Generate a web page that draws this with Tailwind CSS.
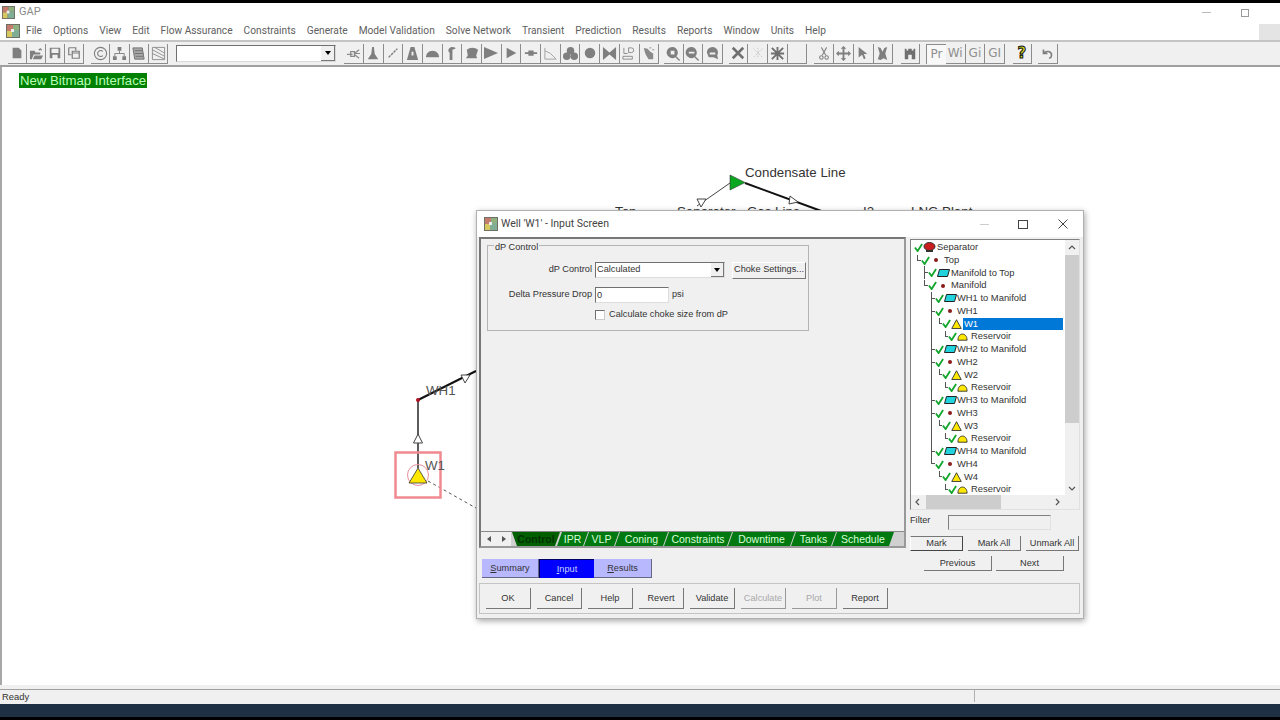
<!DOCTYPE html>
<html lang="en">
  <head>
    <meta charset="UTF-8" />
    <title>GAP</title>
    <script src="https://cdn.jsdelivr.net/npm/@tailwindcss/browser@4"></script>
  </head>
  <body class="bg-white font-['Liberation_Sans',Arial,sans-serif] overflow-hidden">
    <!-- shared icons -->
    <svg class="hidden">
      <symbol id="appicon" viewBox="0 0 14 14">
        <rect width="14" height="14" fill="#6f6f66" /><rect x="1" y="1" width="6" height="6" fill="#c47a6c" /><rect x="7" y="1" width="6" height="5" fill="#8fb07f" /><rect x="1" y="7" width="5" height="6" fill="#d8c860" /><rect x="6" y="6" width="7" height="7" fill="#7fae94" /><rect x="5" y="5" width="3" height="3" fill="#eee" />
      </symbol>
      <symbol id="check" viewBox="0 0 10 10"><path d="M1 5l3 4 5-8" fill="none" stroke="#12a62c" stroke-width="2" /></symbol>
      <symbol id="pipe" viewBox="0 0 13 8"><path d="M2.5.5h10l-2 7H.5z" fill="#22d3dd" stroke="#222" /></symbol>
      <symbol id="dot" viewBox="0 0 10 10"><circle cx="5" cy="5" r="2" fill="#8b1a1a" /></symbol>
      <symbol id="well" viewBox="0 0 12 11"><path d="M6 .8l5.2 9.6H.8z" fill="#ffe800" stroke="#333" /></symbol>
      <symbol id="res" viewBox="0 0 12 8"><path d="M1 7.5C1 3 3.5.8 6 .8S11 3 11 7.5z" fill="#ffe800" stroke="#333" /></symbol>
      <symbol id="sep" viewBox="0 0 13 10"><ellipse cx="6.5" cy="4.5" rx="5.5" ry="4" fill="#c81e1e" stroke="#333" /><path d="M3 9h7" stroke="#333" stroke-width="2" /></symbol>
    </svg>

    <div class="flex flex-col h-[720px] w-[1280px]">
      <div class="h-[3px] bg-black"></div>

      <!-- title bar -->
      <div class="h-[19px] flex items-center pl-[2px] relative">
        <svg class="w-[13px] h-[13px]"><use href="#appicon" /></svg>
        <span class="ml-[4px] text-[11px] text-[#8a8a8a] font-['Roboto',sans-serif]">GAP</span>
        <div class="absolute left-[1202px] top-[9px] w-[9px] h-px bg-[#bbbbbb]"></div>
        <div class="absolute left-[1241px] top-[6px] w-[8px] h-[8px] border border-[#9a9a9a] bg-white"></div>
      </div>

      <!-- menu bar -->
      <div class="h-[18px] flex items-center pl-[6px] text-[10.2px] text-[#606060] font-['Roboto',sans-serif] relative">
        <svg class="w-[14px] h-[14px] mr-[6px]"><use href="#appicon" /></svg>
        <div class="flex gap-[11px]">
          <span>File</span><span>Options</span><span>View</span><span>Edit</span><span>Flow Assurance</span><span>Constraints</span><span>Generate</span><span>Model Validation</span><span>Solve Network</span><span>Transient</span><span>Prediction</span><span>Results</span><span>Reports</span><span>Window</span><span>Units</span><span>Help</span>
        </div>
        <div class="absolute left-[1259px] top-[2px] w-[21px] h-[16px] bg-[#e4e4e4]"></div>
      </div>

      <!-- toolbar -->
      <div class="h-[27px] bg-[#f0f0f0] border-t-2 border-b-2 border-t-[#c4c4c4] border-b-[#a0a0a0] flex items-center pl-[8px] text-[#7a7a7a]">
        <div class="flex">
          <span class="flex items-center justify-center w-[19px] h-[20px] border-r border-b border-[#8c8c8c]"><svg class="w-[14px] h-[14px]" viewBox="0 0 16 16" fill="#7f7f7f"><path d="M3 2h7l3 3v9H3z" /></svg></span>
          <span class="flex items-center justify-center w-[19px] h-[20px] border-r border-b border-[#8c8c8c]"><svg class="w-[15px] h-[15px]" viewBox="0 0 16 16" fill="#7f7f7f"><path d="M1 14V5h5l1 2h5v2H5l-2 5zM4 14l2-4h9l-2 4zM10 4l2-2 2 2-1 1-1-1-1 1z" /></svg></span>
          <span class="flex items-center justify-center w-[19px] h-[20px] border-r border-b border-[#8c8c8c]"><svg class="w-[14px] h-[14px]" viewBox="0 0 16 16" fill="#7f7f7f"><path fill-rule="evenodd" d="M2 2h12v12H2zM4 3v5h8V3zM5 10v4h6v-4z" /></svg></span>
          <span class="flex items-center justify-center w-[19px] h-[20px] border-r border-b border-[#8c8c8c]"><svg class="w-[14px] h-[14px]" viewBox="0 0 16 16" fill="none" stroke="#7f7f7f" stroke-width="1.4"><path d="M2 2h8v3M2 2v8h3M6 6h8v8H6zM6 8h8" /></svg></span>
        </div>
        <div class="flex ml-[7px]">
          <span class="flex items-center justify-center w-[19.3px] h-[20px] border-r border-b border-[#8c8c8c]"><svg class="w-[15px] h-[15px]" viewBox="0 0 16 16" fill="none" stroke="#7f7f7f" stroke-width="1.2"><circle cx="8" cy="8" r="6.5" /><path d="M10.5 5.8a3.2 3.2 0 1 0 0 4.4" /></svg></span>
          <span class="flex items-center justify-center w-[19.3px] h-[20px] border-r border-b border-[#8c8c8c]"><svg class="w-[15px] h-[15px]" viewBox="0 0 16 16" fill="#7f7f7f"><path d="M6 1h4v4H6zM1 11h4v4H1zM11 11h4v4h-4z" /><path d="M8 5v3M3 11V8h10v3" stroke="#7f7f7f" fill="none" /></svg></span>
          <span class="flex items-center justify-center w-[19.3px] h-[20px] border-r border-b border-[#8c8c8c]"><svg class="w-[15px] h-[15px]" viewBox="0 0 16 16" fill="#a8a8a8"><path d="M2 2h10l2 12H4zM4 5h8M4 8h9M5 11h8" stroke="#707070" /></svg></span>
          <span class="flex items-center justify-center w-[19.3px] h-[20px] border-r border-b border-[#8c8c8c]"><svg class="w-[15px] h-[15px]" viewBox="0 0 16 16" fill="none" stroke="#8f8f8f"><path d="M1.5 1.5h13v13h-13zM1.5 4l13 7M1.5 8l13 6M4 1.5l10.5 6" /></svg></span>
        </div>
        <div class="ml-[8px] w-[160px] h-[17px] bg-white border border-t-[#707070] border-l-[#707070] border-r-[#d8d8d8] border-b-[#d8d8d8] flex justify-end">
          <span class="w-[14px] h-full bg-[#f0f0f0] border-r border-b border-[#777777] flex items-center justify-center"><span class="w-0 h-0 border-x-[3.5px] border-x-transparent border-t-[4px] border-t-black"></span></span>
        </div>
        <div class="flex ml-[8px]">
          <span class="flex items-center justify-center w-[19.7px] h-[20px] border-r border-b border-[#8c8c8c]"><svg class="w-[15px] h-[15px]" viewBox="0 0 16 16" fill="none" stroke="#8a8a8a" stroke-width="1.3"><path d="M1 9h6M5 6h4v5H5zM9 8l5-4M9 8h6M9 9l5 4" /></svg></span>
          <span class="flex items-center justify-center w-[19.7px] h-[20px] border-r border-b border-[#8c8c8c]"><svg class="w-[14px] h-[14px]" viewBox="0 0 16 16" fill="#7f7f7f"><path d="M7 1h2l1 8 4 6H2l4-6z" /></svg></span>
          <span class="flex items-center justify-center w-[19.7px] h-[20px] border-r border-b border-[#8c8c8c]"><svg class="w-[14px] h-[14px]" viewBox="0 0 16 16" fill="none" stroke="#7f7f7f" stroke-width="1.6"><path d="M3 13L13 3" stroke-dasharray="3 1" /></svg></span>
          <span class="flex items-center justify-center w-[19.7px] h-[20px] border-r border-b border-[#8c8c8c]"><svg class="w-[15px] h-[15px]" viewBox="0 0 16 16" fill="#7f7f7f"><path fill-rule="evenodd" d="M6 1h4l4 14H2zM7 6v4h2V6z" /></svg></span>
          <span class="flex items-center justify-center w-[19.7px] h-[20px] border-r border-b border-[#8c8c8c]"><svg class="w-[15px] h-[15px]" viewBox="0 0 16 16" fill="#7f7f7f"><path d="M1 12c0-4 3-7 7-7s7 3 7 7z" /></svg></span>
          <span class="flex items-center justify-center w-[19.7px] h-[20px] border-r border-b border-[#8c8c8c]"><svg class="w-[15px] h-[15px]" viewBox="0 0 16 16" fill="#7f7f7f"><path d="M6 15V7C4 6 4 2 8 1c3 0 5 1 4 2l-3 1v11z" /></svg></span>
          <span class="flex items-center justify-center w-[19.7px] h-[20px] border-r border-b border-[#8c8c8c]"><svg class="w-[15px] h-[15px]" viewBox="0 0 16 16" fill="#7f7f7f"><path d="M3 4c3-3 9-3 12 0l-2 6 1 3H2l2-3z" /></svg></span>
          <span class="flex items-center justify-center w-[19.7px] h-[20px] border-r border-b border-[#8c8c8c]"><svg class="w-[16px] h-[16px]" viewBox="0 0 16 16" fill="#7f7f7f"><path d="M1 2l14 6-14 6z" /></svg></span>
          <span class="flex items-center justify-center w-[19.7px] h-[20px] border-r border-b border-[#8c8c8c]"><svg class="w-[14px] h-[14px]" viewBox="0 0 16 16" fill="#7f7f7f"><path d="M3 2l11 6-11 6z" /></svg></span>
          <span class="flex items-center justify-center w-[19.7px] h-[20px] border-r border-b border-[#8c8c8c]"><svg class="w-[14px] h-[14px]" viewBox="0 0 16 16" fill="#7f7f7f"><path d="M1 7h14v2H1zM5 5h6v6H5z" /></svg></span>
          <span class="flex items-center justify-center w-[19.7px] h-[20px] border-r border-b border-[#8c8c8c]"><svg class="w-[15px] h-[15px]" viewBox="0 0 16 16" fill="none" stroke="#a0a0a0"><path d="M2 2v12h12M2 5l6 3 6 6" /></svg></span>
          <span class="flex items-center justify-center w-[19.7px] h-[20px] border-r border-b border-[#8c8c8c]"><svg class="w-[15px] h-[15px]" viewBox="0 0 16 16" fill="#7f7f7f"><circle cx="8" cy="5" r="4" /><circle cx="4" cy="11" r="4" /><circle cx="12" cy="11" r="4" /></svg></span>
          <span class="flex items-center justify-center w-[19.7px] h-[20px] border-r border-b border-[#8c8c8c]"><svg class="w-[14px] h-[14px]" viewBox="0 0 16 16" fill="#7f7f7f"><circle cx="8" cy="8" r="6" /></svg></span>
          <span class="flex items-center justify-center w-[19.7px] h-[20px] border-r border-b border-[#8c8c8c]"><svg class="w-[15px] h-[15px]" viewBox="0 0 16 16" fill="#7f7f7f"><path d="M1 1l7 6 7-6v14l-7-6-7 6z" /></svg></span>
          <span class="flex items-center justify-center w-[19.7px] h-[20px] border-r border-b border-[#8c8c8c]"><svg class="w-[15px] h-[15px]" viewBox="0 0 16 16" fill="none" stroke="#8a8a8a"><path d="M2 2v6h4M7 2v5h3a2 2 0 0 0 0-5zM1 11h10v3H1z" /></svg></span>
          <span class="flex items-center justify-center w-[19.7px] h-[20px] border-r border-b border-[#8c8c8c]"><svg class="w-[15px] h-[15px]" viewBox="0 0 16 16" fill="#8a8a8a"><path d="M3 2l4 1 3 3 3 2v6H8L5 9 4 6z" /><path d="M9 2h2M12 4h2" stroke="#8a8a8a" /></svg></span>
        </div>
        <div class="flex ml-[5px]">
          <span class="flex items-center justify-center w-[19.5px] h-[20px] border-r border-b border-[#8c8c8c]"><svg class="w-[15px] h-[15px]" viewBox="0 0 16 16" fill="#7f7f7f"><path fill-rule="evenodd" d="M7 1a6 6 0 0 1 4 10l4 4-1 1-4-4A6 6 0 1 1 7 1zM5 5v4h4V5z" /></svg></span>
          <span class="flex items-center justify-center w-[19.5px] h-[20px] border-r border-b border-[#8c8c8c]"><svg class="w-[15px] h-[15px]" viewBox="0 0 16 16" fill="#7f7f7f"><path fill-rule="evenodd" d="M7 1a6 6 0 0 1 4 10l4 4-1 1-4-4A6 6 0 1 1 7 1zM4 6v2h6V6z" /></svg></span>
          <span class="flex items-center justify-center w-[19.5px] h-[20px] border-r border-b border-[#8c8c8c]"><svg class="w-[15px] h-[15px]" viewBox="0 0 16 16" fill="#7f7f7f"><path fill-rule="evenodd" d="M8 1a6 6 0 0 1 5 9l1 4-5-2H4l-2-5a6 6 0 0 1 6-6zM5 7v2h6V7z" /></svg></span>
        </div>
        <div class="flex ml-[6px]">
          <span class="flex items-center justify-center w-[19.7px] h-[20px] border-r border-b border-[#8c8c8c]"><svg class="w-[14px] h-[14px]" viewBox="0 0 16 16" fill="none" stroke="#6f6f6f" stroke-width="3"><path d="M2 2l12 12M14 2L2 14" /></svg></span>
          <span class="flex items-center justify-center w-[19.7px] h-[20px] border-r border-b border-[#8c8c8c]"><svg class="w-[12px] h-[12px]" viewBox="0 0 16 16" fill="none" stroke="#bdbdbd" stroke-dasharray="2 1.5"><path d="M2 2l12 12M14 2L2 14M8 1v14" /></svg></span>
          <span class="flex items-center justify-center w-[19.7px] h-[20px] border-r border-b border-[#8c8c8c]"><svg class="w-[15px] h-[15px]" viewBox="0 0 16 16" fill="none" stroke="#6f6f6f" stroke-width="2"><path d="M2 2l12 12M14 2L2 14M8 1v14M1 8h14" /></svg></span>
          <span class="w-[19.7px] h-[20px] border-r border-b border-[#8c8c8c]"></span>
        </div>
        <div class="flex ml-[7px]">
          <span class="flex items-center justify-center w-[19.7px] h-[20px] border-r border-b border-[#8c8c8c]"><svg class="w-[14px] h-[15px]" viewBox="0 0 16 16" fill="none" stroke="#7f7f7f" stroke-width="1.2"><path d="M5 1l5 9M11 1L6 10" /><circle cx="5" cy="12.5" r="2" /><circle cx="11" cy="12.5" r="2" /></svg></span>
          <span class="flex items-center justify-center w-[19.7px] h-[20px] border-r border-b border-[#8c8c8c]"><svg class="w-[15px] h-[15px]" viewBox="0 0 16 16" fill="#7f7f7f"><path d="M8 0l3 3H9v4h4V5l3 3-3 3V9H9v4h2l-3 3-3-3h2V9H3v2L0 8l3-3v2h4V3H5z" /></svg></span>
          <span class="flex items-center justify-center w-[19.7px] h-[20px] border-r border-b border-[#8c8c8c]"><svg class="w-[14px] h-[14px]" viewBox="0 0 16 16" fill="#7f7f7f"><path d="M3 1l10 8H9l2 5-2 1-2-5-4 3z" /></svg></span>
          <span class="flex items-center justify-center w-[19.7px] h-[20px] border-r border-b border-[#8c8c8c]"><svg class="w-[15px] h-[15px]" viewBox="0 0 16 16" fill="#7f7f7f"><path d="M3 1l3 1 2 4 2-4 3-1-2 7 2 7-4-2-3 2-3-1 2-6z" /></svg></span>
        </div>
        <div class="flex ml-[8px]">
          <span class="flex items-center justify-center w-[19px] h-[20px] border-r border-b border-[#8c8c8c]"><svg class="w-[14px] h-[14px]" viewBox="0 0 16 16" fill="#6f6f6f"><path fill-rule="evenodd" d="M2 3h2v2h2V3h4v2h2V3h2v12H2zM6 10v5h4v-5z" /></svg></span>
        </div>
        <div class="flex ml-[6px] text-[12px] text-[#8f8f8f] font-['DejaVu_Sans',sans-serif]">
          <span class="flex items-center justify-center w-[19.7px] h-[20px] border-t border-l border-[#8c8c8c] bg-[#f8f8f8]">Pr</span>
          <span class="flex items-center justify-center w-[19.7px] h-[20px] border-r border-b border-[#8c8c8c]">Wi</span>
          <span class="flex items-center justify-center w-[19.7px] h-[20px] border-r border-b border-[#8c8c8c]">Gi</span>
          <span class="flex items-center justify-center w-[19.7px] h-[20px] border-r border-b border-[#8c8c8c]">GI</span>
        </div>
        <span class="flex items-center justify-center ml-[8px] w-[19px] h-[20px] border-r border-b border-[#8c8c8c] text-[15px] font-bold text-[#d8d820] [-webkit-text-stroke:1px_#111111] font-['DejaVu_Sans',sans-serif]">?</span>
        <span class="flex items-center justify-center ml-[6px] w-[20px] h-[20px] border-r border-b border-[#8c8c8c]"><svg class="w-[13px] h-[13px]" viewBox="0 0 16 16" fill="none" stroke="#7f7f7f" stroke-width="2"><path d="M3 3v5h5M3 8c3-4 10-3 10 2 0 2-1 3-3 4" /></svg></span>
      </div>

      <!-- drawing area -->
      <div class="relative flex-1 border-l-2 border-l-[#a8a8a8]">
        <span class="absolute left-[17px] top-[6px] h-[15px] px-px bg-[#008000] text-[#b8ffb8] text-[13.2px] leading-[15px] whitespace-nowrap">New Bitmap Interface</span>

        <!-- network nodes, page coords minus (2,67) -->
        <svg class="absolute left-[-2px] top-[-67px] w-[1280px] h-[720px]" viewBox="0 0 1280 720">
          <path d="M730 183L697 206" stroke="#444" fill="none" />
          <path d="M745 183L824 212" stroke="#111" stroke-width="2" fill="none" />
          <path d="M730 175l15 7.5-15 7.5z" fill="#0aa81e" stroke="#333" stroke-width=".6" />
          <path d="M697 199l9 0-5 8z" fill="#fff" stroke="#444" />
          <path d="M790 196l8 6-9 2z" fill="#fff" stroke="#444" />
          <path d="M418 400L476 371" stroke="#111" stroke-width="2" fill="none" />
          <path d="M418 400V468" stroke="#333" stroke-width="1.6" fill="none" />
          <path d="M461 375l9 0-5 8z" fill="#fff" stroke="#444" />
          <path d="M418 434l4.5 9h-9z" fill="#fff" stroke="#444" />
          <circle cx="418" cy="400" r="2" fill="#b01020" />
          <path d="M428 481L476 508" stroke="#555" stroke-dasharray="3 3" fill="none" />
          <rect x="395.5" y="452.5" width="45" height="45" fill="none" stroke="#f08a90" stroke-width="2.5" />
          <circle cx="418" cy="475" r="10.5" fill="none" stroke="#e8909a" />
          <path d="M418 468l9 15h-18z" fill="#ffe800" stroke="#333" stroke-width=".8" />
          <text x="745" y="177" font-size="13.3" fill="#333">Condensate Line</text>
          <text x="615" y="216" font-size="13.3" fill="#333">Top</text>
          <text x="677" y="216" font-size="13.3" fill="#333">Separator</text>
          <text x="747" y="216" font-size="13.3" fill="#333">Gas Line</text>
          <text x="863" y="216" font-size="13.3" fill="#333">I2</text>
          <path d="M899 211h10" stroke="#111" stroke-width="2" />
          <text x="911" y="216" font-size="13.3" fill="#333">LNG Plant</text>
          <text x="426" y="395" font-size="13.3" fill="#555">WH1</text>
          <text x="425" y="470" font-size="13.3" fill="#555">W1</text>
        </svg>

        <!-- well dialog -->
        <div class="absolute left-[474px] top-[143px] w-[608px] h-[409px] bg-[#f0f0f0] border border-[#b0b0b0] shadow-[1px_2px_6px_rgba(0,0,0,0.35)] flex flex-col text-[9.2px] text-[#333333]">
          <div class="h-[26px] shrink-0 bg-white flex items-center pl-[7px] relative">
            <svg class="w-[14px] h-[14px]"><use href="#appicon" /></svg>
            <span class="ml-[3px] text-[10.5px] text-[#444444] font-['Roboto',sans-serif]">Well 'W1' - Input Screen</span>
            <div class="absolute left-[503px] top-[13px] w-[9px] h-px bg-[#cccccc]"></div>
            <div class="absolute left-[541px] top-[9px] w-[10px] h-[9px] border border-[#444444]"></div>
            <svg class="absolute left-[581px] top-[8px] w-[10px] h-[10px]" viewBox="0 0 10 10" stroke="#444" fill="none"><path d="M.5.5l9 9M9.5.5l-9 9" /></svg>
          </div>

          <div class="flex flex-1">
            <!-- left column -->
            <div class="w-[429px] pl-[2px] flex flex-col">
              <div class="h-[311px] flex flex-col border-2 border-t-[#777777] border-l-[#777777] border-r-[#999999] border-b-[#999999]">
                <div class="relative mt-[6px] ml-[6px] w-[322px] h-[86px] border border-[#b4b4b4] pt-[16px] pl-[1px]">
                  <span class="absolute left-[6px] top-[-5px] bg-[#f0f0f0] px-px leading-[12px]">dP Control</span>
                  <div class="flex items-center h-[16px]">
                    <span class="w-[103px] text-right">dP Control</span>
                    <div class="ml-[3px] w-[130px] h-[16px] bg-white border border-t-[#707070] border-l-[#707070] border-r-[#dddddd] border-b-[#dddddd] flex items-center justify-between pl-px">
                      <span>Calculated</span>
                      <span class="w-[13px] h-[14px] bg-[#f0f0f0] border-r border-b border-[#777777] flex items-center justify-center"><span class="w-0 h-0 border-x-[3.5px] border-x-transparent border-t-[4px] border-t-black"></span></span>
                    </div>
                    <span class="ml-[7px] w-[74px] h-[17px] flex items-center justify-center whitespace-nowrap border-r border-b border-[#777777] border-t border-l border-t-white border-l-white">Choke Settings...</span>
                  </div>
                  <div class="flex items-center h-[16px] mt-[9px]">
                    <span class="w-[103px] text-right whitespace-nowrap">Delta Pressure Drop</span>
                    <div class="ml-[3px] w-[74px] h-[16px] bg-white border border-t-[#707070] border-l-[#707070] border-r-[#dddddd] border-b-[#dddddd] pl-px leading-[14px]">0</div>
                    <span class="ml-[3px]">psi</span>
                  </div>
                  <div class="flex items-center h-[12px] mt-[6px] ml-[106px]">
                    <span class="w-[10px] h-[10px] bg-white border border-t-[#707070] border-l-[#707070] border-r-[#cccccc] border-b-[#cccccc]"></span>
                    <span class="ml-[4px]">Calculate choke size from dP</span>
                  </div>
                </div>

                <!-- page tabs -->
                <div class="mt-auto h-[15px] flex items-stretch bg-[#d0d0d0] border-t border-[#888888] text-[10.5px] text-[#d8ffd8]">
                  <div class="w-[30px] bg-[#f0f0f0] flex items-center justify-around text-[#555555]">
                    <span class="w-0 h-0 border-y-[3.5px] border-y-transparent border-r-[4px] border-r-[#555555]"></span>
                    <span class="w-0 h-0 border-y-[3.5px] border-y-transparent border-l-[4px] border-l-[#555555]"></span>
                  </div>
                  <span class="w-[48px] ml-[1px] pt-px flex items-center justify-center bg-[#006000] text-[#003000] font-bold [clip-path:polygon(0_0,100%_0,calc(100%-5px)_100%,5px_100%)]">Control</span>
                  <span class="w-[31px] -ml-[3px] pt-px flex items-center justify-center bg-[#007a10] [clip-path:polygon(5px_0,100%_0,calc(100%-5px)_100%,0_100%)]">IPR</span>
                  <span class="w-[35px] -ml-[4px] pt-px flex items-center justify-center bg-[#007a10] [clip-path:polygon(5px_0,100%_0,calc(100%-5px)_100%,0_100%)]">VLP</span>
                  <span class="w-[53px] -ml-[4px] pt-px flex items-center justify-center bg-[#007a10] [clip-path:polygon(5px_0,100%_0,calc(100%-5px)_100%,0_100%)]">Coning</span>
                  <span class="w-[68px] -ml-[4px] pt-px flex items-center justify-center bg-[#007a10] [clip-path:polygon(5px_0,100%_0,calc(100%-5px)_100%,0_100%)]">Constraints</span>
                  <span class="w-[67px] -ml-[4px] pt-px flex items-center justify-center bg-[#007a10] [clip-path:polygon(5px_0,100%_0,calc(100%-5px)_100%,0_100%)]">Downtime</span>
                  <span class="w-[45px] -ml-[4px] pt-px flex items-center justify-center bg-[#007a10] [clip-path:polygon(5px_0,100%_0,calc(100%-5px)_100%,0_100%)]">Tanks</span>
                  <span class="w-[62px] -ml-[4px] pt-px flex items-center justify-center bg-[#007a10] [clip-path:polygon(5px_0,100%_0,calc(100%-5px)_100%,0_100%)]">Schedule</span>
                </div>
              </div>

              <div class="flex mt-[11px] ml-[3px] h-[19px]">
                <span class="w-[57px] pt-px flex items-center justify-center bg-[#b8b8ff] border-r border-b border-[#666688]"><span class="underline">S</span>ummary</span>
                <span class="w-[55px] pt-px flex items-center justify-center bg-[#0000ff] text-[#c8d4ff] border-t border-l border-[#000066]"><span class="underline">I</span>nput</span>
                <span class="w-[58px] pt-px flex items-center justify-center bg-[#b8b8ff] border-r border-b border-[#666688]"><span class="underline">R</span>esults</span>
              </div>
            </div>

            <!-- right column -->
            <div class="ml-[4px] w-[170px] flex flex-col">
              <div class="relative mt-[2px] h-[271px] bg-white border border-t-[#808080] border-l-[#808080] border-r-[#e0e0e0] border-b-[#e0e0e0] overflow-hidden text-[9.4px] leading-[12.75px]">
                <div class="pt-[1px] pl-[3px] h-[256px] overflow-hidden">
                  <div class="flex items-center h-[12.75px]"><svg class="w-[9px] h-[9px]"><use href="#check" /></svg><svg class="w-[13px] h-[10px]"><use href="#sep" /></svg><span class="ml-px">Separator</span></div>
                  <div class="flex items-center h-[12.75px] pl-[3px]"><span class="w-[4px] h-[6px] mb-[4px] border-l border-b border-[#555555]"></span><svg class="w-[9px] h-[9px]"><use href="#check" /></svg><svg class="ml-px w-[10px] h-[10px]"><use href="#dot" /></svg><span class="ml-[3px]">Top</span></div>
                  <div class="flex items-center h-[12.75px] pl-[10px]"><span class="w-[4px] h-[13px] flex items-center border-l border-[#555555]"><span class="w-[4px] h-px bg-[#555555]"></span></span><svg class="w-[9px] h-[9px]"><use href="#check" /></svg><svg class="w-[13px] h-[8px]"><use href="#pipe" /></svg><span class="ml-px">Manifold to Top</span></div>
                  <div class="flex items-center h-[12.75px] pl-[10px]"><span class="w-[4px] h-[6px] mb-[6px] border-l border-b border-[#555555]"></span><svg class="w-[9px] h-[9px]"><use href="#check" /></svg><svg class="ml-px w-[10px] h-[10px]"><use href="#dot" /></svg><span class="ml-[3px]">Manifold</span></div>
                  <div class="flex items-center h-[12.75px] pl-[17px]"><span class="w-[4px] h-[13px] flex items-center border-l border-[#555555]"><span class="w-[4px] h-px bg-[#555555]"></span></span><svg class="w-[9px] h-[9px]"><use href="#check" /></svg><svg class="w-[13px] h-[8px]"><use href="#pipe" /></svg><span>WH1 to Manifold</span></div>
                  <div class="flex items-center h-[12.75px] pl-[17px]"><span class="w-[4px] h-[13px] flex items-center border-l border-[#555555]"><span class="w-[4px] h-px bg-[#555555]"></span></span><svg class="w-[9px] h-[9px]"><use href="#check" /></svg><svg class="ml-px w-[10px] h-[10px]"><use href="#dot" /></svg><span class="ml-[2px]">WH1</span></div>
                  <div class="flex items-center h-[12.75px] pl-[17px]"><span class="h-[13px] border-l border-[#555555]"></span><span class="ml-[7px] w-[3px] h-[6px] mb-[5px] border-l border-b border-[#555555]"></span><svg class="w-[9px] h-[9px]"><use href="#check" /></svg><svg class="w-[11px] h-[10px]"><use href="#well" /></svg><span class="ml-px pl-px w-[100px] h-[12.75px] bg-[#0078d7] text-white">W1</span></div>
                  <div class="flex items-center h-[12.75px] pl-[17px]"><span class="h-[13px] border-l border-[#555555]"></span><span class="ml-[13px] w-[3px] h-[6px] mb-[5px] border-l border-b border-[#555555]"></span><svg class="w-[9px] h-[9px]"><use href="#check" /></svg><svg class="w-[11px] h-[8px]"><use href="#res" /></svg><span class="ml-[3px]">Reservoir</span></div>
                  <div class="flex items-center h-[12.75px] pl-[17px]"><span class="w-[4px] h-[13px] flex items-center border-l border-[#555555]"><span class="w-[4px] h-px bg-[#555555]"></span></span><svg class="w-[9px] h-[9px]"><use href="#check" /></svg><svg class="w-[13px] h-[8px]"><use href="#pipe" /></svg><span>WH2 to Manifold</span></div>
                  <div class="flex items-center h-[12.75px] pl-[17px]"><span class="w-[4px] h-[13px] flex items-center border-l border-[#555555]"><span class="w-[4px] h-px bg-[#555555]"></span></span><svg class="w-[9px] h-[9px]"><use href="#check" /></svg><svg class="ml-px w-[10px] h-[10px]"><use href="#dot" /></svg><span class="ml-[2px]">WH2</span></div>
                  <div class="flex items-center h-[12.75px] pl-[17px]"><span class="h-[13px] border-l border-[#555555]"></span><span class="ml-[7px] w-[3px] h-[6px] mb-[5px] border-l border-b border-[#555555]"></span><svg class="w-[9px] h-[9px]"><use href="#check" /></svg><svg class="w-[11px] h-[10px]"><use href="#well" /></svg><span class="ml-[2px]">W2</span></div>
                  <div class="flex items-center h-[12.75px] pl-[17px]"><span class="h-[13px] border-l border-[#555555]"></span><span class="ml-[13px] w-[3px] h-[6px] mb-[5px] border-l border-b border-[#555555]"></span><svg class="w-[9px] h-[9px]"><use href="#check" /></svg><svg class="w-[11px] h-[8px]"><use href="#res" /></svg><span class="ml-[3px]">Reservoir</span></div>
                  <div class="flex items-center h-[12.75px] pl-[17px]"><span class="w-[4px] h-[13px] flex items-center border-l border-[#555555]"><span class="w-[4px] h-px bg-[#555555]"></span></span><svg class="w-[9px] h-[9px]"><use href="#check" /></svg><svg class="w-[13px] h-[8px]"><use href="#pipe" /></svg><span>WH3 to Manifold</span></div>
                  <div class="flex items-center h-[12.75px] pl-[17px]"><span class="w-[4px] h-[13px] flex items-center border-l border-[#555555]"><span class="w-[4px] h-px bg-[#555555]"></span></span><svg class="w-[9px] h-[9px]"><use href="#check" /></svg><svg class="ml-px w-[10px] h-[10px]"><use href="#dot" /></svg><span class="ml-[2px]">WH3</span></div>
                  <div class="flex items-center h-[12.75px] pl-[17px]"><span class="h-[13px] border-l border-[#555555]"></span><span class="ml-[7px] w-[3px] h-[6px] mb-[5px] border-l border-b border-[#555555]"></span><svg class="w-[9px] h-[9px]"><use href="#check" /></svg><svg class="w-[11px] h-[10px]"><use href="#well" /></svg><span class="ml-[2px]">W3</span></div>
                  <div class="flex items-center h-[12.75px] pl-[17px]"><span class="h-[13px] border-l border-[#555555]"></span><span class="ml-[13px] w-[3px] h-[6px] mb-[5px] border-l border-b border-[#555555]"></span><svg class="w-[9px] h-[9px]"><use href="#check" /></svg><svg class="w-[11px] h-[8px]"><use href="#res" /></svg><span class="ml-[3px]">Reservoir</span></div>
                  <div class="flex items-center h-[12.75px] pl-[17px]"><span class="w-[4px] h-[13px] flex items-center border-l border-[#555555]"><span class="w-[4px] h-px bg-[#555555]"></span></span><svg class="w-[9px] h-[9px]"><use href="#check" /></svg><svg class="w-[13px] h-[8px]"><use href="#pipe" /></svg><span>WH4 to Manifold</span></div>
                  <div class="flex items-center h-[12.75px] pl-[17px]"><span class="w-[4px] h-[6px] mb-[6px] border-l border-b border-[#555555]"></span><svg class="w-[9px] h-[9px]"><use href="#check" /></svg><svg class="ml-px w-[10px] h-[10px]"><use href="#dot" /></svg><span class="ml-[2px]">WH4</span></div>
                  <div class="flex items-center h-[12.75px] pl-[25px]"><span class="w-[3px] h-[6px] mb-[5px] border-l border-b border-[#555555]"></span><svg class="w-[9px] h-[9px]"><use href="#check" /></svg><svg class="w-[11px] h-[10px]"><use href="#well" /></svg><span class="ml-[2px]">W4</span></div>
                  <div class="flex items-center h-[12.75px] pl-[31px]"><span class="w-[3px] h-[6px] mb-[5px] border-l border-b border-[#555555]"></span><svg class="w-[9px] h-[9px]"><use href="#check" /></svg><svg class="w-[11px] h-[8px]"><use href="#res" /></svg><span class="ml-[3px]">Reservoir</span></div>
                </div>
                <!-- scrollbars -->
                <div class="absolute right-0 top-0 w-[14px] h-[256px] bg-[#f0f0f0] flex flex-col items-center justify-between">
                  <svg class="w-[8px] h-[14px]" viewBox="0 0 8 14" fill="none" stroke="#555" stroke-width="1.2"><path d="M1 9l3-3 3 3" /></svg>
                  <div class="absolute top-[15px] left-0 w-[14px] h-[168px] bg-[#cdcdcd]"></div>
                  <svg class="w-[8px] h-[14px]" viewBox="0 0 8 14" fill="none" stroke="#555" stroke-width="1.2"><path d="M1 5l3 3 3-3" /></svg>
                </div>
                <div class="absolute left-0 bottom-0 w-full h-[14px] bg-[#f0f0f0] flex items-center justify-between pr-[18px] pl-[3px]">
                  <svg class="w-[8px] h-[8px]" viewBox="0 0 8 8" fill="none" stroke="#555" stroke-width="1.2"><path d="M5 1L2 4l3 3" /></svg>
                  <div class="absolute top-0 left-[15px] w-[75px] h-[14px] bg-[#cdcdcd]"></div>
                  <svg class="w-[8px] h-[8px]" viewBox="0 0 8 8" fill="none" stroke="#555" stroke-width="1.2"><path d="M3 1l3 3-3 3" /></svg>
                </div>
              </div>

              <div class="flex items-center h-[15px] mt-[5px]">
                <span class="w-[38px] mb-[3px]">Filter</span>
                <div class="w-[103px] h-[15px] bg-[#f0f0f0] border border-t-[#808080] border-l-[#808080] border-r-[#e0e0e0] border-b-[#e0e0e0]"></div>
              </div>
              <div class="flex gap-[5px] mt-[6px] h-[15px]">
                <span class="w-[53px] pt-px flex items-center justify-center border border-l-white border-t-[#777777] border-r-[#444444] border-b-[#444444]">Mark</span>
                <span class="w-[53px] pt-px flex items-center justify-center border-r border-b border-[#777777]">Mark All</span>
                <span class="w-[53px] pt-px flex items-center justify-center border-r border-b border-[#777777]">Unmark All</span>
              </div>
              <div class="flex gap-[4px] mt-[5px] ml-[14px] h-[15px]">
                <span class="w-[68px] pt-px flex items-center justify-center border-r border-b border-[#777777]">Previous</span>
                <span class="w-[68px] pt-px flex items-center justify-center border-r border-b border-[#777777]">Next</span>
              </div>
            </div>
          </div>

          <!-- action buttons -->
          <div class="mx-[2px] mb-[4px] w-[601px] h-[31px] border border-[#c4c4c4] flex items-center gap-[6px] pl-[6px]">
            <span class="w-[45px] h-[21px] pt-px flex items-center justify-center border-r border-b border-[#777777]">OK</span>
            <span class="w-[45px] h-[21px] pt-px flex items-center justify-center border-r border-b border-[#777777]">Cancel</span>
            <span class="w-[45px] h-[21px] pt-px flex items-center justify-center border-r border-b border-[#777777]">Help</span>
            <span class="w-[45px] h-[21px] pt-px flex items-center justify-center border-r border-b border-[#777777]">Revert</span>
            <span class="w-[45px] h-[21px] pt-px flex items-center justify-center border-r border-b border-[#777777]">Validate</span>
            <span class="w-[45px] h-[21px] pt-px flex items-center justify-center border-r border-b border-[#999999] text-[#a8a8a8]">Calculate</span>
            <span class="w-[45px] h-[21px] pt-px flex items-center justify-center border-r border-b border-[#999999] text-[#a8a8a8]">Plot</span>
            <span class="w-[45px] h-[21px] pt-px flex items-center justify-center border-r border-b border-[#777777]">Report</span>
          </div>
        </div>
      </div>

      <!-- status bar -->
      <div class="h-[19px] bg-[#f0f0f0] pt-[4px]">
        <div class="h-[13px] flex border-t border-[#a0a0a0] text-[9.4px] text-[#333333] leading-[13px] pl-[2px]">
          <span class="w-[973px] border-r border-[#b0b0b0]">Ready</span>
        </div>
      </div>
      <div class="h-[13px] bg-[#1e3044]"></div>
      <div class="h-[3px] bg-black"></div>
    </div>
  </body>
</html>
